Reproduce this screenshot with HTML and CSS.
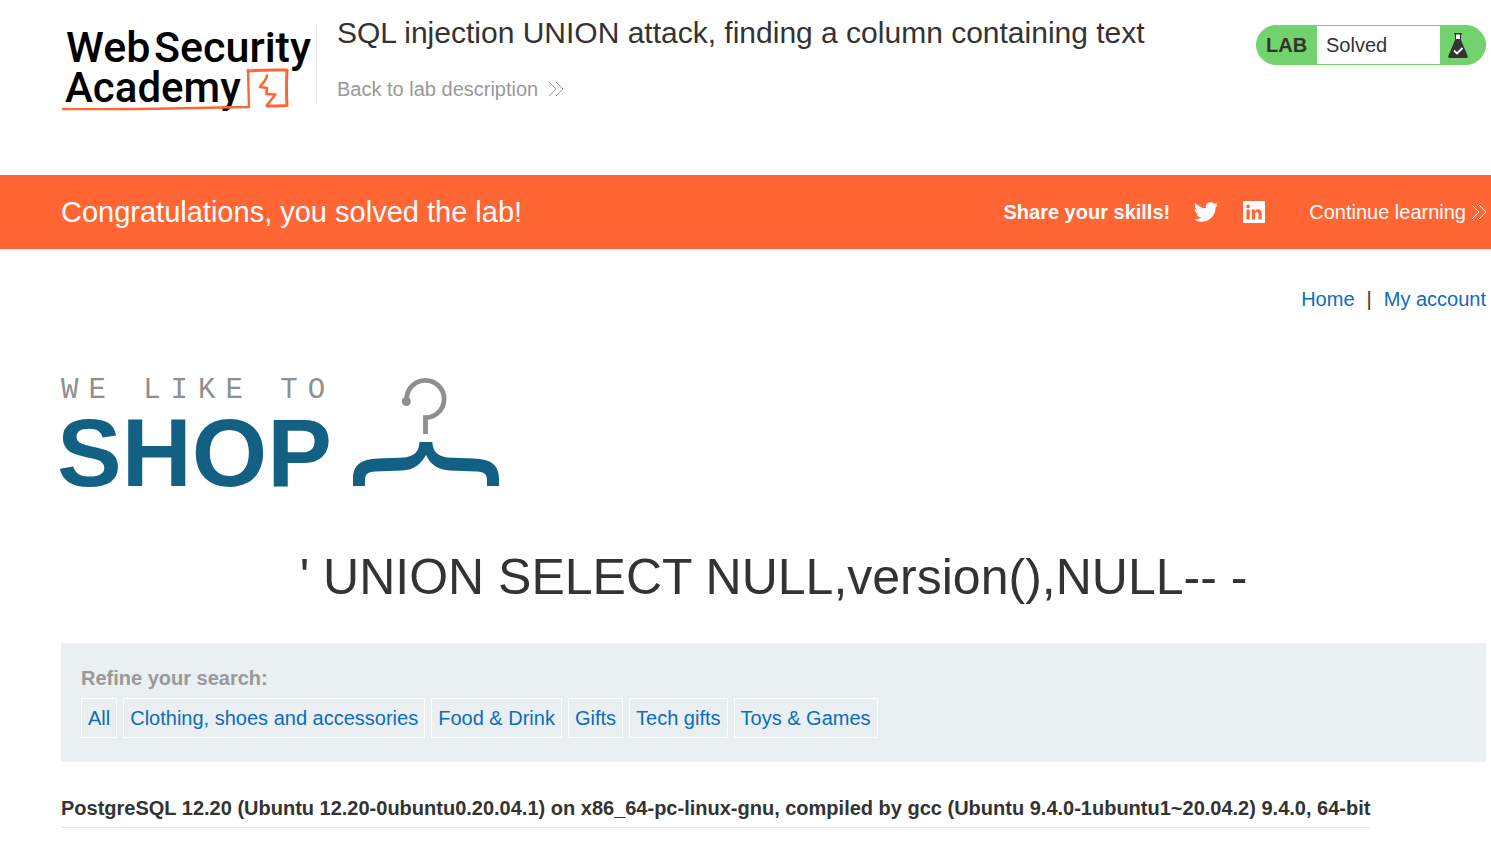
FILE: index.html
```html
<!DOCTYPE html>
<html lang="en">
<head>
<meta charset="utf-8">
<title>SQL injection UNION attack, finding a column containing text</title>
<link rel="stylesheet" href="styles.css">
</head>
<body>
<header class="lab-header">
  <a class="academy-logo" href="#" aria-label="Web Security Academy">
    <svg width="252" height="94" viewBox="61 20 252 94">
      <g class="academy-words">
        <text x="66" y="62">Web</text>
        <text x="154" y="62">Security</text>
        <text class="academy-second" x="65" y="102">Academy</text>
      </g>
      <g fill="none" stroke="#ff6633" stroke-linecap="round" stroke-linejoin="round">
        <path stroke-width="2.4" d="M63 109 C90 109.500 130 109 170 108.500 C205 108 225 107.500 249 107 L248 70"/>
        <path stroke-width="3" d="M248 71 Q268 69.500 287 70 Q286 88 287 105.500 Q277 106 267 106"/>
        <path stroke-width="2.6" d="M267 75.500 C267 80 260.500 85 260 87 L267 88 L266.500 94 L275.500 94.500 L267 105"/>
      </g>
    </svg>
  </a>
  <div class="lab-title">
    <h2>SQL injection UNION attack, finding a column containing text</h2>
    <a class="back-link" href="#">Back to lab description
      <svg width="16" height="16" viewBox="0 0 16 16" aria-hidden="true"><path d="M1 1l7 7-7 7M8 1l7 7-7 7"/></svg>
    </a>
  </div>
  <div class="lab-status">
    <span class="lab-label">LAB</span>
    <p>Solved</p>
    <span class="lab-flask">
      <svg width="20" height="26" viewBox="0 0 20 26" aria-hidden="true">
        <path fill="#333332" d="M6 0h8v1.500h-1V7H7V1.500H6zM7 7h6l6.500 15.500Q20.500 25 18 25H2Q-.5 25 .5 22.500z"/>
        <path fill="#fff" d="M8 1.500h4V6H8z"/>
        <path fill="none" stroke="#fff" stroke-width="1.800" d="M6 17.500l3 3 5.500-5.500"/>
      </svg>
    </span>
  </div>
</header>

<section class="solved-banner">
  <h4>Congratulations, you solved the lab!</h4>
  <div class="share">
    <span class="share-label">Share your skills!</span>
    <a href="#" aria-label="Share on Twitter"><svg width="24" height="24" viewBox="0 0 24 24"><path d="M23.950 4.570a10 10 0 0 1-2.820.770 4.960 4.960 0 0 0 2.160-2.720c-.950.550-2 .960-3.130 1.180a4.920 4.920 0 0 0-8.380 4.480C7.690 8.090 4.070 6.130 1.640 3.160a4.820 4.820 0 0 0-.670 2.480c0 1.710.870 3.210 2.190 4.100a4.900 4.900 0 0 1-2.230-.620v.060a4.920 4.920 0 0 0 3.950 4.830 5 5 0 0 1-2.210.080 4.940 4.940 0 0 0 4.600 3.420A9.870 9.870 0 0 1 0 19.540a14 14 0 0 0 7.550 2.210c9.050 0 14-7.500 14-13.980 0-.210 0-.420-.020-.630a9.940 9.940 0 0 0 2.420-2.570z"/></svg></a>
    <a href="#" aria-label="Share on LinkedIn"><svg width="24" height="24" viewBox="0 0 24 24"><path fill-rule="evenodd" d="M2 1h20q1 0 1 1v20q0 1-1 1H2q-1 0-1-1V2q0-1 1-1zM4.500 9.500v10h3.200v-10zM6.100 4.500a1.900 1.900 0 1 0 0 3.800 1.900 1.900 0 0 0 0-3.800zM9.800 9.500v10H13v-5.200c0-3 3.500-3 3.500 0v5.200h3.200v-6c0-5-5-5.200-6.700-2.700V9.500z"/></svg></a>
  </div>
  <a class="continue" href="#">Continue learning
    <svg width="16" height="16" viewBox="0 0 16 16" aria-hidden="true"><path d="M1 1l7 7-7 7M8 1l7 7-7 7"/></svg>
  </a>
</section>

<main class="page">
  <nav class="top-links">
    <a href="#">Home</a><span>|</span><a href="#">My account</a>
  </nav>

  <svg class="shop-logo" width="440" height="114" viewBox="60 376 440 114" role="img" aria-label="We like to shop">
    <text class="shop-tagline" x="61" y="398">WE LIKE TO</text>
    <text class="shop-name" x="57" y="486">SHOP</text>
    <path fill="none" stroke="#8f8f8f" stroke-width="4.800" d="M406.700 401 V399 A18.700 18.700 0 1 1 425.500 417.700 V434"/>
    <circle cx="406.300" cy="401.500" r="4.500" fill="#8f8f8f"/>
    <path fill="#136085" d="M419.500 442H432.300C433 452 438 456 447 457.500L474 458.500C491 459 499 465 499 479V486H487V480C487 474 484 472 477 471.500L450 470.500C438 470 430 464 426 455C421 464 414 470 402 470.500L375 471.500C368 472 365 474 365 480V486H353V479C353 465 361 459 378 458.500L405 457.500C414 456 419 452 419.500 442Z"/>
  </svg>

  <h1>' UNION SELECT NULL,version(),NULL-- -</h1>

  <section class="filters">
    <strong>Refine your search:</strong>
    <div class="filter-list">
      <a href="#">All</a>
      <a href="#">Clothing, shoes and accessories</a>
      <a href="#">Food &amp; Drink</a>
      <a href="#">Gifts</a>
      <a href="#">Tech gifts</a>
      <a href="#">Toys &amp; Games</a>
    </div>
  </section>

  <table class="results">
    <tbody>
      <tr><th scope="row">PostgreSQL 12.20 (Ubuntu 12.20-0ubuntu0.20.04.1) on x86_64-pc-linux-gnu, compiled by gcc (Ubuntu 9.4.0-1ubuntu1~20.04.2) 9.4.0, 64-bit</th></tr>
    </tbody>
  </table>
</main>
</body>
</html>
```
FILE: styles.css
```css
* {
  box-sizing: border-box;
}

body {
  margin: 0;
  background: #fff;
  color: #333332;
  font: 20px/24px "Liberation Sans", Arial, sans-serif;
}

h1, h2, h4, p {
  margin: 0;
  font-weight: 400;
}

a {
  color: #0b6cbd;
  text-decoration: none;
}

svg {
  display: block;
  overflow: visible;
}

.lab-header {
  display: flex;
  align-items: flex-start;
  padding: 20px 5px 61px 61px;
}

.academy-words {
  font: 500 43px Roboto, sans-serif;
  fill: #000;
}

.academy-second {
  font-size: 42px;
}

.lab-title {
  flex: 1;
  height: 78px;
  margin: 5px 0 0 3px;
  padding-left: 20px;
  border-left: 1px solid #e4e4e4;
}

.lab-title h2 {
  margin-top: -9px;
  font-size: 30px;
  line-height: 34px;
}

.back-link,
.continue {
  display: flex;
  align-items: center;
}

.back-link {
  gap: 10px;
  width: fit-content;
  margin-top: 27px;
  color: #999;
}

.back-link path,
.continue path {
  fill: none;
  stroke: currentColor;
}

.lab-status {
  display: flex;
  width: 230px;
  height: 40px;
  margin-top: 5px;
  overflow: hidden;
  border: 1px solid #72d26d;
  border-radius: 20px;
  background: #72d26d;
  line-height: 38px;
}

.lab-label {
  width: 60px;
  padding-left: 9px;
  font-weight: 700;
}

.lab-status p {
  flex: 1;
  padding-left: 9px;
  background: #fff;
}

.lab-flask {
  width: 45px;
  padding: 7px 0 0 8px;
}

.solved-banner {
  display: flex;
  align-items: center;
  padding: 20px 4px 20px 61px;
  background: #ff6633;
  color: #fff;
}

.solved-banner h4 {
  flex: 1;
  font-size: 29px;
  line-height: 34px;
}

.solved-banner a {
  color: #fff;
}

.solved-banner .share path {
  fill: #fff;
}

.share {
  display: flex;
  align-items: center;
  gap: 24px;
  margin-right: 43px;
}

.share-label {
  font-weight: 700;
}

.continue {
  gap: 5px;
}

.page {
  padding: 38px 5px 20px 61px;
}

.top-links {
  display: flex;
  justify-content: flex-end;
  gap: 12px;
}

.shop-logo {
  margin: 65px 0 0 -1px;
}

.shop-tagline {
  font: 29px "Liberation Mono", monospace;
  letter-spacing: 10px;
  fill: #8f8f8f;
}

.shop-name {
  font: 700 97px "Liberation Sans", Arial, sans-serif;
  fill: #136085;
}

h1 {
  margin-top: 57px;
  font-size: 50px;
  line-height: 60px;
  text-align: center;
}

.filters {
  margin-top: 36px;
  padding: 23px 20px 24px;
  background: #eaeff2;
}

.filters strong {
  display: block;
  color: #999;
}

.filter-list {
  display: flex;
  flex-wrap: wrap;
  gap: 6px;
  margin-top: 8px;
}

.filter-list a {
  padding: 7px 6px;
  border: 1px solid #fff;
}

.results {
  margin-top: 33px;
  border-collapse: collapse;
}

.results th {
  padding: 1px 0 7px;
  border-bottom: 1px solid #e4e4e4;
  text-align: left;
}
```
